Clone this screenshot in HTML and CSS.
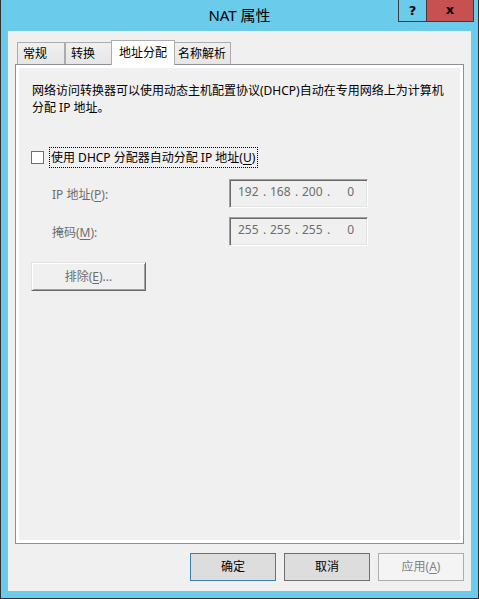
FILE: index.html
```html
<!DOCTYPE html>
<html lang="zh-CN">
  <head>
    <meta charset="UTF-8" />
    <title>NAT 属性</title>
    <link rel="stylesheet" href="styles.css">
  </head>
  <body>
    <div class="window">
      <div class="titlebar">
        <span class="titlebar__text">NAT 属性</span>
        <div class="titlebar__buttons">
          <span class="cap cap--help">?</span>
          <span class="cap cap--close">x</span>
        </div>
      </div>

      <div class="client">
        <div class="tabs">
          <div class="tab">常规</div>
          <div class="tab">转换</div>
          <div class="tab tab--active">地址分配</div>
          <div class="tab tab--wide">名称解析</div>
        </div>

        <div class="panel">
          <p class="panel__intro">
            网络访问转换器可以使用动态主机配置协议(DHCP)自动在专用网络上为计算机<br>分配 IP 地址。
          </p>

          <label class="check">
            <span class="check__box"></span>
            <span class="check__label">使用 DHCP 分配器自动分配 IP 地址(<u>U</u>)</span>
          </label>

          <div class="field">
            <span class="field__label">IP 地址(<u>P</u>):</span>
            <div class="ip">
              <span class="ip__num">192</span><span class="ip__dot">.</span>
              <span class="ip__num">168</span><span class="ip__dot">.</span>
              <span class="ip__num">200</span><span class="ip__dot">.</span>
              <span class="ip__num">0</span>
            </div>
          </div>

          <div class="field field--next">
            <span class="field__label">掩码(<u>M</u>):</span>
            <div class="ip">
              <span class="ip__num">255</span><span class="ip__dot">.</span>
              <span class="ip__num">255</span><span class="ip__dot">.</span>
              <span class="ip__num">255</span><span class="ip__dot">.</span>
              <span class="ip__num">0</span>
            </div>
          </div>

          <div class="panel__btn">排除(<u>E</u>)...</div>
        </div>

        <div class="actions">
          <div class="btn btn--default">确定</div>
          <div class="btn">取消</div>
          <div class="btn btn--disabled">应用(<u>A</u>)</div>
        </div>
      </div>
    </div>
  </body>
</html>
```

FILE: styles.css
```css
* {
  box-sizing: border-box;
  margin: 0;
  padding: 0;
}
body {
  font-family: "Noto Sans", "Noto Sans CJK SC", sans-serif;
  font-size: 12px;
  color: #000;
  background: #fff;
}
u {
  text-decoration-thickness: 1px;
  text-underline-offset: 2px;
}

/* window frame */
.window {
  width: 479px;
  height: 599px;
  display: flex;
  flex-direction: column;
  background: #6acbea;
  border: 1px solid #2f2f2f;
  border-top: 0;
  padding: 0 7px 7px;
}
.titlebar {
  position: relative;
  height: 31px;
  margin: 0 -7px;
  text-align: center;
  font-size: 15px;
  line-height: 30px;
  color: #000;
}
.titlebar__buttons {
  position: absolute;
  top: 0;
  right: 4px;
  display: flex;
  border: 1px solid #3a3a3a;
  border-top: 0;
}
.cap {
  height: 21px;
  display: flex;
  align-items: center;
  justify-content: center;
  font-family: "DejaVu Sans", sans-serif;
  font-weight: bold;
  font-size: 13px;
}
.cap--help {
  width: 28px;
  border-right: 1px solid #3a3a3a;
}
.cap--close {
  width: 46px;
  background: #c75050;
  padding-bottom: 2px;
}

/* client area */
.client {
  flex: 1;
  display: flex;
  flex-direction: column;
  background: #f0f0f0;
  padding: 9px 7px 10px;
}
.tabs {
  display: flex;
  align-items: flex-end;
  height: 24px;
  padding-left: 2px;
}
.tab {
  height: 22px;
  min-width: 48px;
  padding: 0 5px;
  line-height: 21px;
  border: 1px solid #acacac;
  border-bottom: 0;
  background: linear-gradient(#f0f0f0, #e6e6e6);
}
.tab--active {
  position: relative;
  z-index: 1;
  height: 25px;
  margin: 0 -2px -1px;
  padding: 0 7px;
  line-height: 23px;
  background: #fff;
}
.tab--wide {
  padding: 0 4px;
}

.panel {
  flex: 1;
  border: 1px solid #8e8f96;
  box-shadow: inset 0 0 0 3px #fff;
  background: #f0f0f0;
  padding: 17px 16px;
}
.panel__intro {
  line-height: 17px;
}

.check {
  display: flex;
  align-items: center;
  margin: 31px 0 0 -1px;
}
.check__box {
  width: 13px;
  height: 13px;
  border: 1px solid #707070;
  background: #fff;
  margin-right: 5px;
}
.check__label {
  height: 21px;
  line-height: 19px;
  padding: 0 2px 0 1px;
  border: 1px dotted #000;
}

.field {
  display: grid;
  grid-template-columns: 197px 139px;
  align-items: center;
  margin-top: 11px;
  color: #6d6d6d;
}
.field--next {
  margin-top: 9px;
}
.field__label {
  padding-left: 20px;
}
.ip {
  display: flex;
  height: 29px;
  padding: 3px 0 0 8px;
  line-height: 17px;
  border: 1px solid;
  border-color: #a0a0a0 #fff #fff #a0a0a0;
  box-shadow: inset 1px 1px 0 #696969, inset -1px -1px 0 #e3e3e3;
  color: #6d6d6d;
}
.ip__num {
  width: 20px;
  text-align: right;
}
.ip__dot {
  width: 12px;
  padding-left: 5px;
}

.panel__btn {
  width: 115px;
  height: 29px;
  margin: 16px 0 0 -1px;
  line-height: 27px;
  text-align: center;
  color: #6d6d6d;
  border: 1px solid;
  border-color: #e3e3e3 #696969 #696969 #e3e3e3;
  box-shadow: inset 1px 1px 0 #fff, inset -1px -1px 0 #a0a0a0;
}

/* dialog buttons */
.actions {
  display: flex;
  justify-content: flex-end;
  gap: 8px;
  margin-top: 9px;
}
.btn {
  width: 86px;
  height: 28px;
  line-height: 26px;
  text-align: center;
  background: #dddddd;
  border: 1px solid #707070;
}
.btn--default {
  border-color: #3c7fb1;
}
.btn--disabled {
  background: #f4f4f4;
  border-color: #adadad;
  color: #838383;
}
```
